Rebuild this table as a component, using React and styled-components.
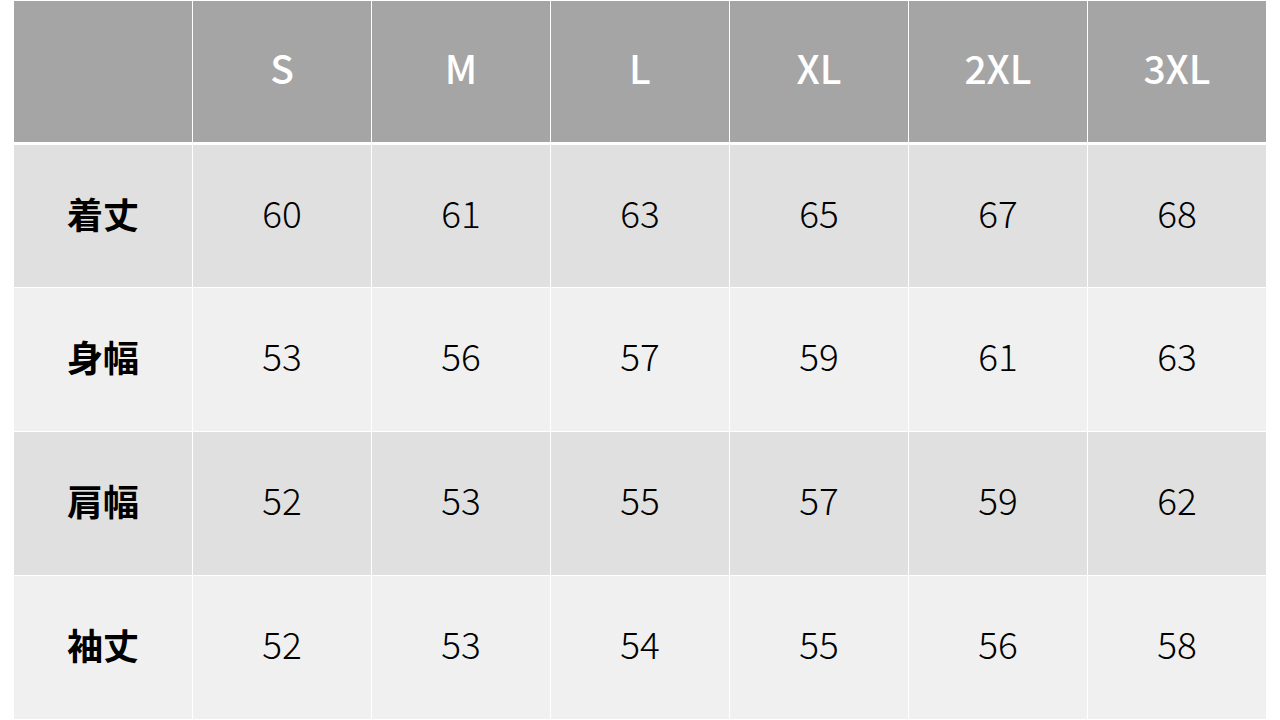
import React from "react";
import styled, { createGlobalStyle } from "styled-components";

const Global = createGlobalStyle`
  html, body { margin: 0; padding: 0; background: #ffffff; }
  body { font-family: "Noto Sans CJK JP", "Noto Sans", sans-serif; }
`;

const Page = styled.div`
  width: 1280px;
  height: 720px;
  padding: 1px 14px 0 14px;
  box-sizing: border-box;
  background: #ffffff;
`;

const Table = styled.div`
  display: flex;
  flex-direction: column;
  width: 1252px;
`;

const Row = styled.div`
  display: grid;
  grid-template-columns: repeat(7, 178px);
  column-gap: 1px;
  height: ${(p) => p.$h}px;
  margin-bottom: ${(p) => p.$gap}px;
`;

const Cell = styled.div`
  display: flex;
  align-items: center;
  justify-content: center;
  background: ${(p) => p.$bg};
  color: ${(p) => p.$color || "#000"};
  font-size: ${(p) => p.$size}px;
  font-weight: ${(p) => p.$weight};
  line-height: 1;
  padding-bottom: ${(p) => p.$lift || 0}px;
  box-sizing: border-box;
`;

const sizes = ["S", "M", "L", "XL", "2XL", "3XL"];
const rows = [
  { label: "着丈", values: [60, 61, 63, 65, 67, 68], h: 142 },
  { label: "身幅", values: [53, 56, 57, 59, 61, 63], h: 143 },
  { label: "肩幅", values: [52, 53, 55, 57, 59, 62], h: 143 },
  { label: "袖丈", values: [52, 53, 54, 55, 56, 58], h: 143 },
];

export default function App() {
  return (
    <Page>
      <Global />
      <Table>
        <Row $h={141} $gap={3}>
          <Cell $bg="#a5a5a5" />
          {sizes.map((s) => (
            <Cell key={s} $bg="#a5a5a5" $color="#ffffff" $size={39} $weight={500} $lift={8}>
              {s}
            </Cell>
          ))}
        </Row>
        {rows.map((r, i) => {
          const bg = i % 2 === 0 ? "#e0e0e0" : "#f0f0f0";
          return (
            <Row key={r.label} $h={r.h} $gap={1}>
              <Cell $bg={bg} $size={36} $weight={700} $lift={7}>
                {r.label}
              </Cell>
              {r.values.map((v, j) => (
                <Cell key={j} $bg={bg} $size={37} $weight={300} $lift={8}>
                  {v}
                </Cell>
              ))}
            </Row>
          );
        })}
      </Table>
    </Page>
  );
}
